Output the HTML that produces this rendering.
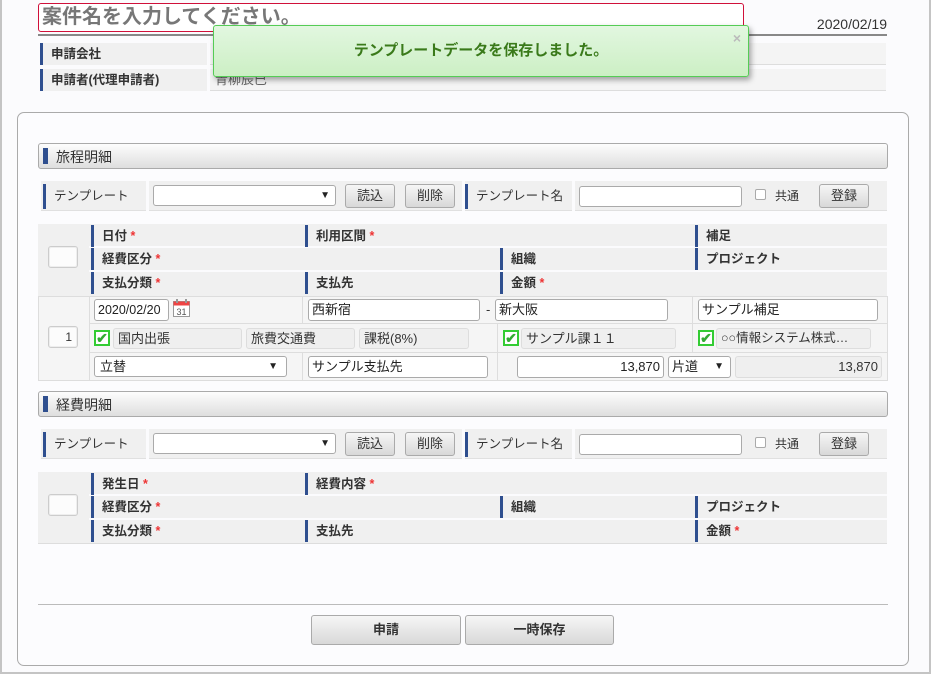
<!DOCTYPE html>
<html><head><meta charset="utf-8"><style>
*{box-sizing:border-box;margin:0;padding:0}
body{width:931px;height:674px;overflow:hidden;background:#fbfbfd;font-family:"Liberation Sans","Noto Sans CJK JP",sans-serif;font-size:13px;color:#333;position:relative}
.a{position:absolute}
.frame{left:0;top:0;width:931px;height:674px;border:2px solid #c4c4c4;border-top:none}
.lbl{background:#f0f0f0;border-left:3px solid #2f4f8f;font-weight:bold;font-size:12.5px;padding-left:8px;line-height:22px}
.lbl2{border-left:3px solid #2f4f8f;font-size:12.5px;padding-left:8px;line-height:22px;color:#333}
.g{font-weight:bold}
.val{background:#f4f4f4}
.sec{border:1px solid #aaa;border-radius:3px;background:linear-gradient(#fdfdfd,#dedede);height:26px}
.sec b{position:absolute;left:4px;top:4px;width:5px;height:16px;background:#2f4f8f}
.sec span{position:absolute;left:17px;top:3px;font-size:14px}
.inp{background:#fff;border:1px solid #aaa;border-radius:3px;height:22px;font-size:13px;line-height:20px;padding-left:3px;color:#222}
.btn{border:1px solid #aaa;border-radius:3px;background:linear-gradient(#f6f6f6,#d8d8d8);text-align:center;font-size:13px;line-height:22px;height:24px}
.ro{background:#efefef;border:1px solid #ddd;border-radius:3px;height:21px;line-height:19px;padding-left:4px;font-size:13px}
.cb{width:16px;height:16px;border:2px solid #3c3;background:#fff;color:#3a3;font-size:14px;line-height:12px;text-align:center;font-weight:bold}
.st{color:#e33}
.hd{background:#f0f0f0}
.box{background:#fcfcfc;border:1px solid #ccc;border-radius:3px;box-shadow:inset 0 0 0 1px #eee}
</style></head><body>
<div class="a frame"></div>
<div class="a" style="left:38px;top:3px;width:706px;height:29px;border:1px solid #d0103a;border-radius:3px;background:#fff;font-size:20px;font-weight:bold;color:#777;padding-left:3px;line-height:27px">案件名を入力してください。</div>
<div class="a" style="left:38px;top:34px;width:849px;height:2px;background:#888"></div>
<div class="a" style="left:780px;top:16px;width:107px;text-align:right;font-size:14px;color:#333">2020/02/19</div>
<div class="a lbl" style="left:40px;top:43px;width:167px;height:22px">申請会社</div>
<div class="a val" style="left:210px;top:43px;width:676px;height:22px;border-bottom:1px solid #ddd"></div>
<div class="a lbl" style="left:40px;top:69px;width:167px;height:22px">申請者(代理申請者)</div>
<div class="a val" style="left:210px;top:69px;width:676px;height:22px;border-bottom:1px solid #ddd;padding-left:5px;line-height:22px;color:#666">青柳辰巳</div>

<div class="a" style="left:213px;top:25px;width:536px;height:52px;border:1px solid #5c5;border-radius:3px;background:linear-gradient(#e2f7e0,#ccefc4);box-shadow:2px 3px 6px rgba(0,0,0,.35);text-align:center;line-height:50px;font-size:15px;font-weight:bold;color:#3a7a1a">テンプレートデータを保存しました。<span class="a" style="right:7px;top:-13px;color:#bbb;font-size:14px">×</span></div>

<div class="a" style="left:17px;top:112px;width:892px;height:554px;border:1px solid #aaa;border-radius:7px;background:#fcfcfe"></div>

<!-- section 1 -->
<div class="a sec" style="left:38px;top:143px;width:850px"><b></b><span>旅程明細</span></div>
<div class="a" style="left:41px;top:181px;width:846px;height:30px;background:#f0f0f0;border-bottom:1px solid #e0e0e0"></div>
<div class="a" style="left:146px;top:181px;width:3px;height:30px;background:#fbfbfd"></div>
<div class="a lbl2" style="left:43px;top:184px;height:25px;line-height:25px">テンプレート</div>
<div class="a inp" style="left:153px;top:185px;width:183px;height:21px"><span class="a" style="right:5px;top:0;font-size:10px">▼</span></div>
<div class="a btn" style="left:345px;top:184px;width:50px">読込</div>
<div class="a btn" style="left:405px;top:184px;width:50px">削除</div>
<div class="a" style="left:462px;top:181px;width:3px;height:30px;background:#fbfbfd"></div>
<div class="a lbl2" style="left:465px;top:184px;height:25px;line-height:25px">テンプレート名</div>
<div class="a" style="left:572px;top:181px;width:3px;height:30px;background:#fbfbfd"></div>
<div class="a inp" style="left:579px;top:186px;width:163px;height:21px"></div>
<div class="a" style="left:755px;top:189px;width:11px;height:11px;border:1px solid #aaa;border-radius:2px;background:#fff"></div>
<div class="a" style="left:775px;top:187px;font-size:12px">共通</div>
<div class="a btn" style="left:819px;top:184px;width:50px">登録</div>

<div class="a hd" style="left:38px;top:224px;width:849px;height:72px"></div>
<div class="a" style="left:89px;top:246px;width:798px;height:2px;background:#fbfbfd"></div>
<div class="a" style="left:89px;top:270px;width:798px;height:2px;background:#fbfbfd"></div>
<div class="a box" style="left:48px;top:246px;width:30px;height:22px"></div>
<div class="a lbl2 g" style="left:91px;top:225px">日付 <span class="st">*</span></div>
<div class="a lbl2 g" style="left:305px;top:225px">利用区間 <span class="st">*</span></div>
<div class="a lbl2 g" style="left:695px;top:225px">補足</div>
<div class="a lbl2 g" style="left:91px;top:248px">経費区分 <span class="st">*</span></div>
<div class="a lbl2 g" style="left:500px;top:248px">組織</div>
<div class="a lbl2 g" style="left:695px;top:248px">プロジェクト</div>
<div class="a lbl2 g" style="left:91px;top:272px">支払分類 <span class="st">*</span></div>
<div class="a lbl2 g" style="left:305px;top:272px">支払先</div>
<div class="a lbl2 g" style="left:500px;top:272px">金額 <span class="st">*</span></div>

<div class="a" style="left:38px;top:296px;width:850px;height:85px;border:1px solid #ddd;background:#f5f5f5"></div>
<div class="a" style="left:89px;top:297px;width:1px;height:83px;background:#ddd"></div>
<div class="a" style="left:302px;top:297px;width:1px;height:26px;background:#ddd"></div>
<div class="a" style="left:302px;top:352px;width:1px;height:28px;background:#ddd"></div>
<div class="a" style="left:497px;top:324px;width:1px;height:56px;background:#ddd"></div>
<div class="a" style="left:692px;top:297px;width:1px;height:55px;background:#ddd"></div>
<div class="a" style="left:90px;top:323px;width:797px;height:1px;background:#ddd"></div>
<div class="a" style="left:90px;top:352px;width:797px;height:1px;background:#ddd"></div>
<div class="a box" style="left:48px;top:326px;width:30px;height:22px;text-align:right;padding-right:5px;line-height:20px;font-size:12px">1</div>
<div class="a inp" style="left:94px;top:299px;width:75px;height:22px;font-size:12.5px">2020/02/20</div>
<svg class="a" style="left:173px;top:299px" width="18" height="19" viewBox="0 0 18 19"><rect x="0.5" y="2.5" width="16" height="15" fill="#fff" stroke="#999"/><rect x="0.5" y="2.5" width="16" height="4" fill="#e44"/><rect x="3" y="0" width="2" height="4" fill="#999"/><rect x="12" y="0" width="2" height="4" fill="#999"/><text x="8.5" y="16" font-size="9" text-anchor="middle" fill="#555" font-family="Liberation Sans">31</text></svg>
<div class="a inp" style="left:308px;top:299px;width:172px">西新宿</div>
<div class="a" style="left:486px;top:302px">-</div>
<div class="a inp" style="left:495px;top:299px;width:173px">新大阪</div>
<div class="a inp" style="left:698px;top:299px;width:180px">サンプル補足</div>
<div class="a cb" style="left:94px;top:330px">✔</div>
<div class="a ro" style="left:113px;top:328px;width:129px">国内出張</div>
<div class="a ro" style="left:246px;top:328px;width:109px">旅費交通費</div>
<div class="a ro" style="left:359px;top:328px;width:110px">課税(8%)</div>
<div class="a cb" style="left:503px;top:330px">✔</div>
<div class="a ro" style="left:521px;top:328px;width:155px">サンプル課１１</div>
<div class="a cb" style="left:698px;top:330px">✔</div>
<div class="a ro" style="left:716px;top:328px;width:155px;font-size:12.5px">○○情報システム株式…</div>
<div class="a inp" style="left:94px;top:356px;width:193px;height:21px;padding-left:5px">立替<span class="a" style="right:8px;top:0;font-size:10px">▼</span></div>
<div class="a inp" style="left:308px;top:356px;width:180px">サンプル支払先</div>
<div class="a inp" style="left:517px;top:356px;width:147px;text-align:right;padding-right:3px">13,870</div>
<div class="a inp" style="left:668px;top:356px;width:63px">片道<span class="a" style="right:6px;top:0;font-size:10px">▼</span></div>
<div class="a ro" style="left:735px;top:356px;width:147px;height:22px;text-align:right;padding-right:3px;line-height:20px">13,870</div>

<!-- section 2 -->
<div class="a sec" style="left:38px;top:391px;width:850px"><b></b><span>経費明細</span></div>
<div class="a" style="left:41px;top:429px;width:846px;height:30px;background:#f0f0f0;border-bottom:1px solid #e0e0e0"></div>
<div class="a" style="left:146px;top:429px;width:3px;height:30px;background:#fbfbfd"></div>
<div class="a lbl2" style="left:43px;top:432px;height:25px;line-height:25px">テンプレート</div>
<div class="a inp" style="left:153px;top:433px;width:183px;height:21px"><span class="a" style="right:5px;top:0;font-size:10px">▼</span></div>
<div class="a btn" style="left:345px;top:432px;width:50px">読込</div>
<div class="a btn" style="left:405px;top:432px;width:50px">削除</div>
<div class="a" style="left:462px;top:429px;width:3px;height:30px;background:#fbfbfd"></div>
<div class="a lbl2" style="left:465px;top:432px;height:25px;line-height:25px">テンプレート名</div>
<div class="a" style="left:572px;top:429px;width:3px;height:30px;background:#fbfbfd"></div>
<div class="a inp" style="left:579px;top:434px;width:163px;height:21px"></div>
<div class="a" style="left:755px;top:437px;width:11px;height:11px;border:1px solid #aaa;border-radius:2px;background:#fff"></div>
<div class="a" style="left:775px;top:435px;font-size:12px">共通</div>
<div class="a btn" style="left:819px;top:432px;width:50px">登録</div>

<div class="a hd" style="left:38px;top:472px;width:849px;height:72px;border-bottom:1px solid #ddd"></div>
<div class="a" style="left:89px;top:494px;width:798px;height:2px;background:#fbfbfd"></div>
<div class="a" style="left:89px;top:518px;width:798px;height:2px;background:#fbfbfd"></div>
<div class="a box" style="left:48px;top:494px;width:30px;height:22px"></div>
<div class="a lbl2 g" style="left:91px;top:473px">発生日 <span class="st">*</span></div>
<div class="a lbl2 g" style="left:305px;top:473px">経費内容 <span class="st">*</span></div>
<div class="a lbl2 g" style="left:91px;top:496px">経費区分 <span class="st">*</span></div>
<div class="a lbl2 g" style="left:500px;top:496px">組織</div>
<div class="a lbl2 g" style="left:695px;top:496px">プロジェクト</div>
<div class="a lbl2 g" style="left:91px;top:520px">支払分類 <span class="st">*</span></div>
<div class="a lbl2 g" style="left:305px;top:520px">支払先</div>
<div class="a lbl2 g" style="left:695px;top:520px">金額 <span class="st">*</span></div>

<div class="a" style="left:38px;top:604px;width:850px;height:1px;background:#bbb"></div>
<div class="a btn g" style="left:311px;top:615px;width:150px;height:30px;line-height:28px">申請</div>
<div class="a btn g" style="left:465px;top:615px;width:149px;height:30px;line-height:28px">一時保存</div>
</body></html>
